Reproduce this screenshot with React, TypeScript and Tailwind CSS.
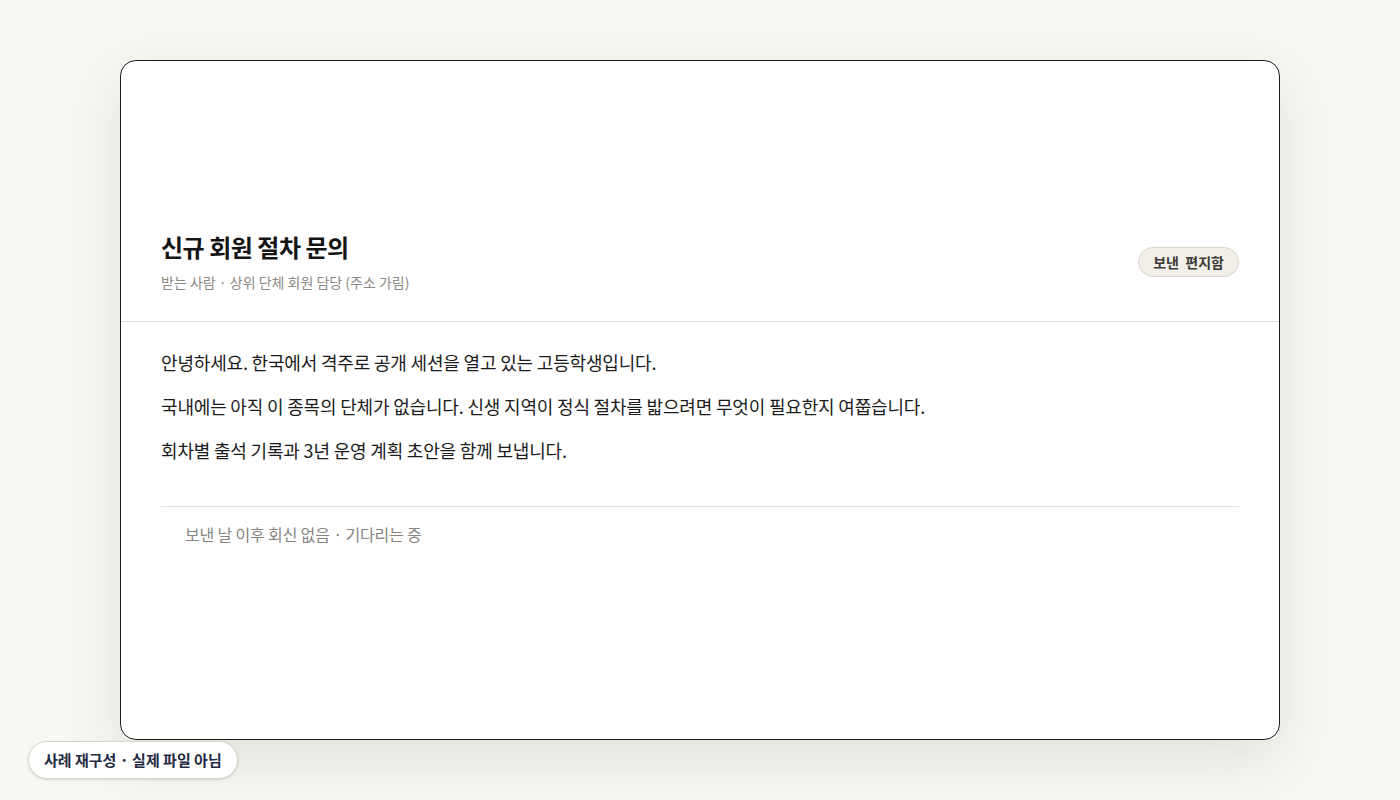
export default function App() {
  return (
    <div
      className="relative min-h-[800px] w-full bg-[#f8f7f2] text-[#1b1b1b]"
      style={{ fontFamily: '"Noto Sans CJK KR", "Noto Sans", sans-serif' }}
    >
      <div className="px-[120px] pt-[60px] pb-[60px]">
        <div className="flex h-[680px] flex-col rounded-2xl border border-[#1c1c1c] bg-white shadow-[0_20px_60px_rgba(60,55,40,0.12)]">
          <header className="flex h-[261px] items-end justify-between border-b border-[#e2dfd6] px-10 pb-[29px]">
            <div>
              <h1 className="text-[24px] font-bold leading-8 tracking-[-0.02em] text-[#141414]">신규 회원 절차 문의</h1>
              <p className="mt-[9px] text-[14px] leading-5 text-[#8c8a85]">
                받는 사람 · 상위 단체 회원 담당 (주소 가림)
              </p>
            </div>
            <span className="mb-[15px] flex h-[30px] items-center whitespace-pre rounded-full border border-[#d9d5c7] bg-[#f1efe7] px-[14px] text-[14px] font-bold leading-5 text-[#3b3a36]">
              {'보낸  편지함'}
            </span>
          </header>
          <div className="px-10 pt-[25px]">
            <div className="flex flex-col gap-[13.5px] text-[18px] leading-[30.5px] tracking-[-0.01em] text-[#1b1b1b]">
              <p>안녕하세요. 한국에서 격주로 공개 세션을 열고 있는 고등학생입니다.</p>
              <p>국내에는 아직 이 종목의 단체가 없습니다. 신생 지역이 정식 절차를 밟으려면 무엇이 필요한지 여쭙습니다.</p>
              <p>회차별 출석 기록과 3년 운영 계획 초안을 함께 보냅니다.</p>
            </div>
            <div className="mt-[40px] border-t border-[#e2dfd6] pt-[15px] pl-6">
              <p className="text-[16px] leading-6 tracking-[-0.01em] text-[#86847f]">보낸 날 이후 회신 없음 · 기다리는 중</p>
            </div>
          </div>
        </div>
      </div>
      <div className="absolute bottom-[21px] left-[28px] flex h-[38px] items-center rounded-full border border-[#d9d5c7] bg-white px-[15px] text-[15px] font-bold leading-5 text-[#1f2a44] shadow-sm">
        사례 재구성 · 실제 파일 아님
      </div>
    </div>
  )
}
